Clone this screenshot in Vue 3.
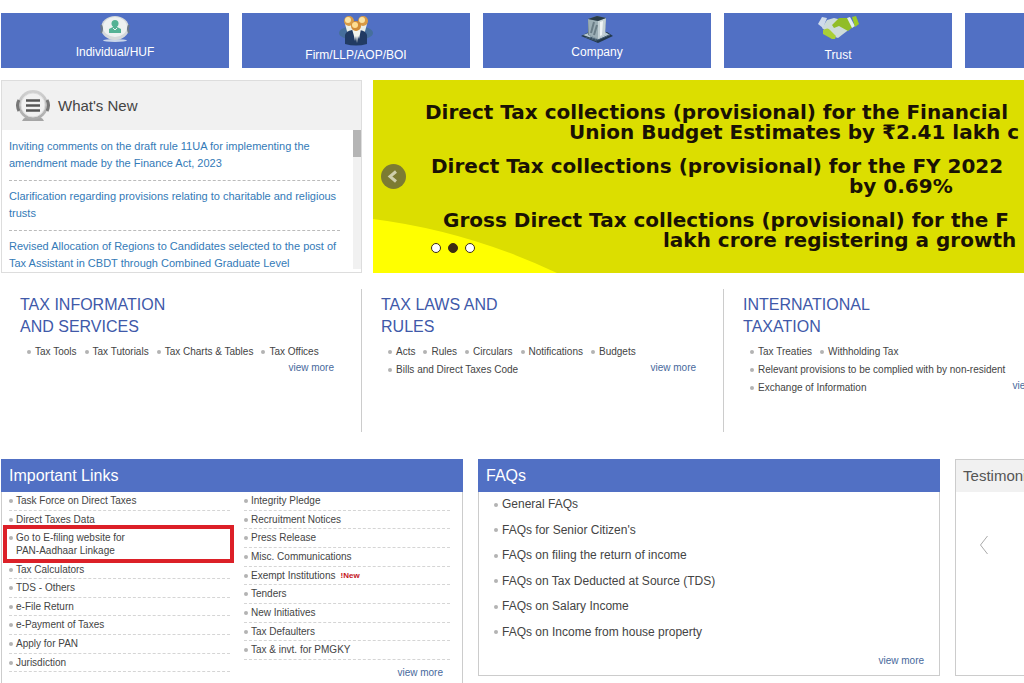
<script setup>
const news = [
  'Inviting comments on the draft rule 11UA for implementing the amendment made by the Finance Act, 2023',
  'Clarification regarding provisions relating to charitable and religious trusts',
  'Revised Allocation of Regions to Candidates selected to the post of Tax Assistant in CBDT through Combined Graduate Level',
]
const topics = [
  { title: ['TAX INFORMATION', 'AND SERVICES'], rows: [['Tax Tools', 'Tax Tutorials', 'Tax Charts & Tables', 'Tax Offices']] },
  { title: ['TAX LAWS AND', 'RULES'], rows: [['Acts', 'Rules', 'Circulars', 'Notifications', 'Budgets'], ['Bills and Direct Taxes Code']] },
  { title: ['INTERNATIONAL', 'TAXATION'], rows: [['Tax Treaties', 'Withholding Tax'], ['Relevant provisions to be complied with by non-resident'], ['Exchange of Information']] },
]
const linksLeft = [
  'Task Force on Direct Taxes', 'Direct Taxes Data', 'Go to E-filing website for PAN-Aadhaar Linkage', 'Tax Calculators',
  'TDS - Others', 'e-File Return', 'e-Payment of Taxes', 'Apply for PAN', 'Jurisdiction',
]
const linksRight = [
  'Integrity Pledge', 'Recruitment Notices', 'Press Release', 'Misc. Communications', 'Exempt Institutions',
  'Tenders', 'New Initiatives', 'Tax Defaulters', 'Tax & invt. for PMGKY',
]
const faqs = [
  'General FAQs', "FAQs for Senior Citizen's", 'FAQs on filing the return of income',
  'FAQs on Tax Deducted at Source (TDS)', 'FAQs on Salary Income', 'FAQs on Income from house property',
]
</script>

<template>
  <div class="viewport">
    <main class="page">
      <nav class="tabs">
        <a class="tab" href="#">
          <svg width="30" height="28" viewBox="0 0 30 28">
            <ellipse cx="15" cy="25.500" rx="12" ry="1.500" fill="#c9d6ea" />
            <path d="M4 8Q-1 13 4 20M26 8Q31 13 26 20" fill="#69788c" />
            <ellipse cx="15" cy="13" rx="14" ry="12" fill="#d5d9da" />
            <ellipse cx="15" cy="12" rx="12" ry="10" fill="#edf1f0" />
            <path d="M1 10q2 4 0 8M29 10q-2 4 0 8" stroke="#69788c" stroke-width="2" fill="none" />
            <circle cx="15" cy="8.500" r="3.500" fill="#54b294" />
            <path d="M9 18v-4l4-2v-2h4v2l4 2v4z" fill="#54b294" />
            <path d="M13 13l2 2 2-2" stroke="#edf1f0" fill="none" />
          </svg>
          <span>Individual/HUF</span>
        </a>
        <a class="tab" href="#">
          <svg width="34" height="31" viewBox="0 0 34 31">
            <ellipse cx="17" cy="18" rx="17" ry="7" fill="#466f9c" />
            <path d="M6 9l3 11 5-2 0-9zM20 9l1 10 4 1 3-11z" fill="#e9eee9" />
            <circle cx="10" cy="6" r="5" fill="#d89a45" /><circle cx="9" cy="5" r="3" fill="#fae3a4" />
            <circle cx="24" cy="6" r="5" fill="#d89a45" /><circle cx="23" cy="5" r="3" fill="#fae3a4" />
            <path d="M6 29V20q1-4 7-5h8q6 1 7 5v9q-11 3-22 0z" fill="#213b63" />
            <path d="M13 14l2 7 1 5 1-5 1 7 1-7 1 3 2-10z" fill="#f2f4ed" />
            <circle cx="17" cy="11" r="5" fill="#d28c38" /><circle cx="16" cy="10" r="3" fill="#ffdd91" />
          </svg>
          <span>Firm/LLP/AOP/BOI</span>
        </a>
        <a class="tab" href="#">
          <svg width="34" height="28" viewBox="0 0 34 28">
            <path d="M1 21l8-4h18l6 4-15 7z" fill="#23394d" />
            <path d="M3 20l8-3h14l5 3-13 5z" fill="#b8cbd5" />
            <path d="M8 4l9-3 9 2-1 17-8 4-9-4z" fill="#6d818b" />
            <path d="M8 4l10 2v18l-9-4z" fill="#9baeb5" />
            <path d="M18 6l8-3-1 17-7 4z" fill="#c5d2d6" />
            <path d="M20 7l3-1-1 14-2 1z" fill="#eef4f5" />
            <path d="M8 4l9-3 9 2-8 3z" fill="#293b46" />
            <path d="M11 18l3-11M14 20l3-10" stroke="#6a7d86" stroke-width="2" fill="none" />
            <path d="M10 22l8 3 11-5M5 22l12 4" stroke="#40586b" fill="none" />
          </svg>
          <span>Company</span>
        </a>
        <a class="tab" href="#">
          <svg width="42" height="31" viewBox="0 0 42 31">
            <path d="M10 5l7-2 12 3 5 7-13 10-6-2-10-8z" fill="#cddbd9" />
            <path d="M5 2l5 1-4 10-5-4z" fill="#cfdbeb" />
            <path d="M6 15q5-3 7 0l6 6-1 3-3 0-9-5z" fill="#a9cf35" />
            <path d="M15 10l7-7h9l5 9-5 4-9-5-5 2z" fill="#91bd27" />
            <path d="M30 3l3-1 5 9-3 2z" fill="#e2edf1" />
            <path d="M35 2l4-1 3 8-4 3z" fill="#9dcb25" />
          </svg>
          <span>Trust</span>
        </a>
        <a class="tab" href="#" aria-label="More taxpayers"></a>
      </nav>

      <div class="feature">
        <section class="news">
          <h2 class="news-head">
            <svg width="34" height="35" viewBox="0 0 34 35">
              <defs><linearGradient id="ring" x2="0" y2="1"><stop stop-color="#d2d2d2" /><stop offset="1" stop-color="#aaa" /></linearGradient></defs>
              <path d="M6 33q2-5 11-5t11 5z" fill="#a5a5a5" />
              <circle cx="17" cy="17" r="15" fill="url(#ring)" />
              <path d="M3 12q-3 5 0 11M31 12q3 5 0 11" fill="none" stroke="#777" stroke-width="3" />
              <circle cx="17" cy="17" r="12" fill="#f1f1f1" stroke="#ddd" />
              <path d="M10 12.500h14M10 17.500h14M10 22.500h14" stroke="#555" stroke-width="2.500" />
            </svg>
            What's New
          </h2>
          <div class="news-body">
            <ul>
              <li v-for="item in news" :key="item"><a href="#">{{ item }}</a></li>
            </ul>
            <div class="track"><div class="thumb"></div></div>
          </div>
        </section>
        <section class="banner">
          <svg class="swoosh" viewBox="0 0 184 54" aria-hidden="true"><path d="M0 0Q95 12 184 54H0z" fill="#ff0" /></svg>
          <p><span class="l1">Direct Tax collections (provisional) for the Financial</span><span class="l2">Union Budget Estimates by ₹2.41 lakh c</span></p>
          <p><span class="l3">Direct Tax collections (provisional) for the FY 2022</span><span class="l4">by 0.69%</span></p>
          <p><span class="l5">Gross Direct Tax collections (provisional) for the F</span><span class="l6">lakh crore registering a growth</span></p>
          <button class="prev" aria-label="Previous slide">
            <svg width="25" height="25" viewBox="0 0 25 25"><circle cx="12.500" cy="12.500" r="12.500" fill="#7c7b32" /><path d="M15 7.500l-6 5 6 5" fill="none" stroke="#cfceab" stroke-width="3" /></svg>
          </button>
          <div class="dots">
            <button aria-label="Slide 1"></button><button class="on" aria-label="Slide 2"></button><button aria-label="Slide 3"></button>
          </div>
        </section>
      </div>

      <div class="topics">
        <section v-for="t in topics" :key="t.title[0]" class="topic">
          <h2><span v-for="line in t.title" :key="line">{{ line }}</span></h2>
          <div class="topic-body">
            <ul v-for="(row, i) in t.rows" :key="i">
              <li v-for="item in row" :key="item"><a href="#">{{ item }}</a></li>
            </ul>
            <a class="more" :class="{ single: t.rows.length === 1 }" href="#">view more</a>
          </div>
        </section>
      </div>

      <div class="panels">
        <section class="panel important">
          <h2>Important Links</h2>
          <div class="link-columns">
            <ul class="left">
              <li v-for="(item, i) in linksLeft" :key="item" :class="{ marked: i === 2 }"><a href="#">{{ item }}</a></li>
            </ul>
            <div>
              <ul class="right">
                <li v-for="(item, i) in linksRight" :key="item"><a href="#">{{ item }}</a><b v-if="i === 4">!New</b></li>
              </ul>
              <a class="more" href="#">view more</a>
            </div>
          </div>
        </section>
        <section class="panel faq">
          <h2>FAQs</h2>
          <ul><li v-for="item in faqs" :key="item"><a href="#">{{ item }}</a></li></ul>
          <a class="more" href="#">view more</a>
        </section>
        <section class="panel testimonials">
          <h2>Testimonials</h2>
          <button aria-label="Previous testimonial">
            <svg width="10" height="20" viewBox="0 0 10 20"><path d="M8.500 1L1.500 10l7 9" fill="none" stroke="#aaa" /></svg>
          </button>
        </section>
      </div>
    </main>
  </div>
</template>

<style>
body { margin: 0; background: #fff; overflow: hidden; }
</style>

<style scoped>
* { box-sizing: border-box; }
.viewport { height: 100vh; overflow: hidden; font-family: "Liberation Sans", Arial, sans-serif; color: #444; }
.page { width: 117vw; padding: 13px 5px 0 1px; }
h2, p, ul { margin: 0; padding: 0; font-weight: normal; }
ul { list-style: none; }
a { color: inherit; text-decoration: none; }
button { border: 0; padding: 0; background: none; display: block; }
svg { display: block; }

.tabs { display: grid; grid-template-columns: repeat(5, 1fr); gap: 13px; }
.tab { height: 55px; padding-top: 2px; background: #5170c4; color: #fff; display: flex; flex-direction: column; align-items: center; font-size: 12px; line-height: 18px; }

.feature { display: grid; grid-template-columns: 361fr 820fr; gap: 11px; margin-top: 12px; height: 193px; }
.news { border: 1px solid #ddd; display: flex; flex-direction: column; min-width: 0; min-height: 0; }
.news-head { flex: none; height: 49px; background: #f1f1f1; display: flex; align-items: center; gap: 8px; padding-left: 14px; font-size: 15px; color: #444; }
.news-body { flex: 1; min-height: 0; display: flex; overflow: hidden; margin-bottom: 3px; }
.news-body ul { flex: 1; padding: 8px 13px 0 7px; }
.news-body li { font-size: 11px; line-height: 17px; color: #337ab7; border-bottom: 1px dashed #bbb; padding-bottom: 8px; margin-bottom: 7px; }
.track { width: 8px; background: #f1f1f1; }
.thumb { height: 27px; background: #b5b5b5; }

.banner { position: relative; background: #dcde00; overflow: hidden; padding-top: 22px; min-width: 0; }
.banner p { font: bold 20px/20px "DejaVu Sans", sans-serif; color: #1a1204; margin-bottom: 14px; white-space: nowrap; position: relative; }
.banner span { display: block; }
.l1 { padding-left: 52px; }
.l2 { padding-left: 196px; }
.l3 { padding-left: 58px; }
.l4 { padding-left: 476px; }
.l5 { padding-left: 70px; }
.l6 { padding-left: 290px; }
.swoosh { position: absolute; left: 0; bottom: 0; width: 184px; height: 54px; }
.prev { position: absolute; left: 8px; top: 84px; }
.dots { position: absolute; left: 58px; top: 163px; display: flex; gap: 7px; }
.dots button { width: 10px; height: 10px; border-radius: 50%; background: #fff; border: 1px solid #3d2c12; }
.dots .on { background: #3d2c12; }

.topics { display: grid; grid-template-columns: 361fr 362fr 469fr; margin-top: 16px; height: 143px; }
.topic { padding: 5px 27px 0 19px; border-right: 1px solid #ccc; min-width: 0; }
.topic:last-child { border: 0; padding-right: 135px; }
.topic h2 { font-size: 16px; line-height: 22px; color: #4059a9; }
.topic h2 span { display: block; }
.topic-body { position: relative; padding: 5px 0 0 7px; }
.topic ul { display: flex; gap: 8px; height: 18px; white-space: nowrap; }
.topic li { display: flex; align-items: center; font-size: 10px; line-height: 18px; }
li::before { content: ""; flex: none; width: 4px; height: 4px; border-radius: 50%; background: #b3b3b3; }
.news-body li::before { content: none; }
.topic li::before { margin-right: 4px; }
.more { font-size: 10px; line-height: 16px; color: #48699c; white-space: nowrap; }
.topic .more { position: absolute; right: 0; bottom: 3px; }
.topic .more.single { bottom: -15px; }

.panels { display: grid; grid-template-columns: 462fr 462fr 238fr; gap: 15px; margin-top: 27px; align-items: start; }
.panel { border: 1px solid #ccc; min-width: 0; }
.panel h2 { height: 33px; margin: -1px -1px 0; padding-left: 8px; font-size: 16px; line-height: 33px; background: #5170c4; color: #fff; }
.important { height: 236px; }
.link-columns { display: grid; grid-template-columns: 221fr 206fr; gap: 14px; padding: 0 12px 0 7px; align-items: start; }
.link-columns ul { display: flex; flex-direction: column; }
.left { height: 180px; }
.right { height: 168px; }
.link-columns li { flex: 1 0 auto; position: relative; font-size: 10px; line-height: 13px; padding: 2px 0 2px 7px; border-bottom: 1px dashed #d5d5d5; }
.link-columns li::before { position: absolute; left: 0; top: 7px; }
.link-columns li a { display: block; max-width: 125px; }
.right li { display: flex; }
.link-columns b { color: #c4161c; font-size: 8px; margin-left: 5px; }
.link-columns .marked::after { content: ""; position: absolute; inset: -4px -4px -3px -6px; border: 4px solid #dc2028; }
.link-columns .more { display: block; text-align: right; padding: 5px 7px 0 0; }

.faq { height: 217px; }
.faq ul { display: grid; grid-auto-rows: 1fr; height: 153px; padding: 0 0 0 15px; }
.faq li { display: flex; align-items: center; gap: 4px; font-size: 12px; line-height: 25px; }
.faq .more { display: block; text-align: right; padding: 8px 15px 0 0; }
.testimonials { height: 217px; }
.testimonials h2 { margin: 0; height: 32px; padding-left: 7px; font-size: 15px; line-height: 31px; background: #f1f1f1; color: #555; }
.testimonials button { margin: 43px 0 0 23px; }
</style>
